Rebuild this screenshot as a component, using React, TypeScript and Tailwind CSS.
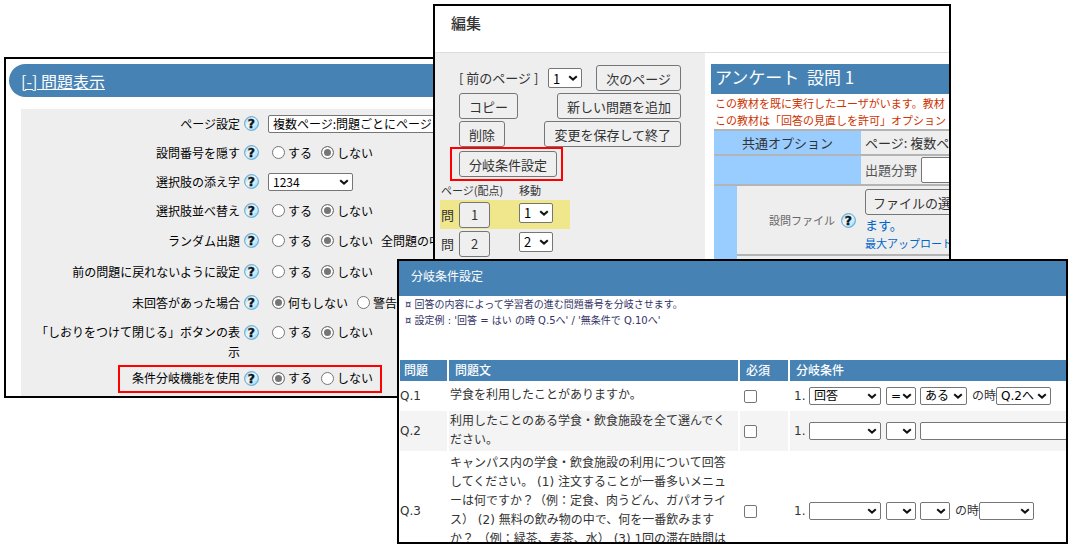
import type { ReactNode } from 'react';

const jp = "font-['Noto_Sans_CJK_JP',sans-serif]";
const verdana = "font-['DejaVu_Sans','Noto_Sans_CJK_JP',sans-serif]";

function HelpIcon() {
  return (
    <svg viewBox="0 0 15 15" className="size-[15px] shrink-0" role="img" aria-label="ヘルプ">
      <defs>
        <linearGradient id="help" x1="0" y1="0" x2="1" y2="1">
          <stop offset="0" stopColor="#8fc3e0" />
          <stop offset="0.4" stopColor="#eaf7fe" />
          <stop offset="0.7" stopColor="#c8ebfb" />
          <stop offset="1" stopColor="#5cc0ee" />
        </linearGradient>
      </defs>
      <circle cx="7.5" cy="7.5" r="6.9" fill="url(#help)" stroke="#4a9cc8" strokeWidth="0.9" />
      <text
        x="7.5"
        y="12"
        textAnchor="middle"
        fontSize="12.5"
        fontWeight="900"
        fontFamily="DejaVu Sans"
        fill="#0b1620"
        stroke="#0b1620"
        strokeWidth="0.4"
      >
        ?
      </text>
    </svg>
  );
}

function Select({ value = '', label, className }: { value?: string; label: string; className: string }) {
  return (
    <span className={`relative inline-flex shrink-0 ${className}`}>
      <select
        aria-label={label}
        defaultValue={value}
        className="w-full appearance-none rounded-[2px] border border-[#767676] bg-white pl-1 leading-none text-black"
      >
        <option value={value}>{value}</option>
      </select>
      <svg viewBox="0 0 10 6" className="pointer-events-none absolute top-1/2 right-1 h-[6px] w-[10px] -translate-y-1/2">
        <path d="M1.2 1.2 5 4.6 8.8 1.2" fill="none" stroke="#111" strokeWidth="2" />
      </svg>
    </span>
  );
}

function Radio({ name, label, checked = false }: { name: string; label: string; checked?: boolean }) {
  return (
    <label className="flex shrink-0 items-center gap-[3px] whitespace-nowrap">
      <input
        type="radio"
        name={name}
        defaultChecked={checked}
        className="size-[13px] appearance-none rounded-full border border-[#767676] bg-white checked:bg-[#767676] checked:shadow-[inset_0_0_0_2px_#fff]"
      />
      {label}
    </label>
  );
}

function YesNo({ name, yes = false }: { name: string; yes?: boolean }) {
  return (
    <div className="flex gap-[9px] pl-1">
      <Radio name={name} label="する" checked={yes} />
      <Radio name={name} label="しない" checked={!yes} />
    </div>
  );
}

function SettingRow({ label, className, children }: { label: ReactNode; className: string; children: ReactNode }) {
  return (
    <div className={`flex gap-[9px] ${className}`}>
      <div className="flex w-[238px] shrink-0 justify-end gap-1">
        <span className="text-right leading-5">{label}</span>
        <span className="flex h-5 items-center">
          <HelpIcon />
        </span>
      </div>
      <div className="flex h-5 items-center gap-2 whitespace-nowrap">{children}</div>
    </div>
  );
}

function DisplaySettings() {
  return (
    <section className="absolute top-[57px] left-1 flex h-[341px] w-[54%] flex-col overflow-hidden border-2 border-black bg-white pt-[5px] pl-[3px]">
      <h2 className="flex h-[33px] shrink-0 items-center rounded-l-full bg-[#4682b4] pl-3 text-base text-white">
        <a href="#display" className="underline">
          [-] 問題表示
        </a>
      </h2>
      <div className="mt-3 ml-3 flex-1 bg-[#eee] text-xs text-black">
        <SettingRow label="ページ設定" className="h-[29px] items-center">
          <Select label="ページ設定" value="複数ページ:問題ごとにページ" className="h-[18px] w-[220px]" />
        </SettingRow>
        <SettingRow label="設問番号を隠す" className="h-[29px] items-center">
          <YesNo name="hide-number" />
        </SettingRow>
        <SettingRow label="選択肢の添え字" className="h-[29px] items-center">
          <Select label="選択肢の添え字" value="1234" className="h-[18px] w-[85px]" />
        </SettingRow>
        <SettingRow label="選択肢並べ替え" className="h-[29px] items-center">
          <YesNo name="sort" />
        </SettingRow>
        <SettingRow label="ランダム出題" className="h-[31px] items-center">
          <YesNo name="random" />
          <span>全問題の中</span>
        </SettingRow>
        <SettingRow label="前の問題に戻れないように設定" className="h-[31px] items-center">
          <YesNo name="no-back" />
        </SettingRow>
        <SettingRow label="未回答があった場合" className="h-[31px] items-center">
          <div className="flex gap-[9px] pl-1">
            <Radio name="unanswered" label="何もしない" checked />
            <Radio name="unanswered" label="警告" />
          </div>
        </SettingRow>
        <SettingRow
          label={
            <>
              「しおりをつけて閉じる」ボタンの表
              <br />示
            </>
          }
          className="h-[45px] pt-1"
        >
          <YesNo name="bookmark" />
        </SettingRow>
        <div className="relative">
          <SettingRow label="条件分岐機能を使用" className="h-[30px] items-center">
            <YesNo name="branch" yes />
          </SettingRow>
          <span className="pointer-events-none absolute top-[2px] left-[97px] h-[28px] w-[264px] border-2 border-[#f00]" />
        </div>
      </div>
    </section>
  );
}

function Button({ children, className = 'px-[9px]' }: { children: ReactNode; className?: string }) {
  return (
    <button
      type="button"
      className={`h-[26px] shrink-0 rounded-[3px] border border-[#767676] bg-[#efefef] text-[13px] leading-none whitespace-nowrap ${className}`}
    >
      {children}
    </button>
  );
}

function PageRow({ page, className = '' }: { page: string; className?: string }) {
  return (
    <div className={`flex h-[29px] w-[130px] items-center pl-px text-[13px] ${className}`}>
      <span className="w-[18px]">問</span>
      <Button className="w-[31px]">{page}</Button>
      <Select label={`問 ${page} 移動`} value={page} className="mb-1 ml-[29px] h-5 w-[34px]" />
    </div>
  );
}

function Sidebar() {
  return (
    <nav className="w-[270px] shrink-0 bg-[#eee] pt-3">
      <div className="ml-6 flex w-[222px] flex-col gap-[2px]">
        <div className="flex h-[26px] items-center text-[13px]">
          <span className="w-[89px] whitespace-nowrap">[ 前のページ ]</span>
          <Select label="ページ" value="1" className="h-5 w-[34px]" />
          <span className="flex-1" />
          <Button>次のページ</Button>
        </div>
        <div className="flex justify-between">
          <Button>コピー</Button>
          <Button>新しい問題を追加</Button>
        </div>
        <div className="flex justify-between">
          <Button>削除</Button>
          <Button>変更を保存して終了</Button>
        </div>
      </div>
      <div className="ml-[15px] flex h-[34px] w-[113px] items-center border-2 border-[#f00] pl-[7px]">
        <Button>分岐条件設定</Button>
      </div>
      <div className="flex h-[19px] items-center pl-[6px] text-[11px]">
        <span className="w-[78px]">ページ(配点)</span>
        <span>移動</span>
      </div>
      <div className="pl-[5px]">
        <PageRow page="1" className="bg-[#f0e68c]" />
        <PageRow page="2" />
      </div>
    </nav>
  );
}

function QuestionForm() {
  const cell = 'border-t-2 border-[#b4b4b4] pl-1';
  return (
    <div className="min-w-0 flex-1 overflow-hidden pt-[11px] pl-[6px]">
      <h3 className="h-[30px] bg-[#4682b4] pl-1 text-[17px] leading-[26px] whitespace-nowrap text-white">
        アンケート{'\u00a0 '}設問 1
      </h3>
      <p className="h-[35px] pt-px pl-1 text-[11px] leading-[17px] whitespace-nowrap text-[#cc3300]">
        この教材を既に実行したユーザがいます。教材
        <br />
        この教材は「回答の見直しを許可」オプション
      </p>
      <table className="ml-[3px] w-[400px] table-fixed border-collapse bg-[#eee] text-left text-[13px] whitespace-nowrap">
        <colgroup>
          <col className="w-[23px]" />
          <col className="w-[124px]" />
          <col />
        </colgroup>
        <tbody>
          <tr className="h-[25px]">
            <th colSpan={2} className="border-t-2 border-[#b4b4b4] bg-[#99ccff] text-center leading-5 font-normal">
              共通オプション
            </th>
            <td className={`${cell} leading-5`}>ページ: 複数ページ</td>
          </tr>
          <tr className="h-[30px]">
            <th colSpan={2} className="border-t-2 border-[#b4b4b4] bg-[#99ccff]" />
            <td className={`${cell} text-[#555]`}>
              <label className="flex items-center gap-1">
                出題分野
                <input type="text" className="h-[26px] w-40 rounded-[2px] border border-[#767676] bg-white" />
              </label>
            </td>
          </tr>
          <tr className="h-[70px]">
            <th rowSpan={2} className="border-t-2 border-[#b4b4b4] bg-[#99ccff]" />
            <th className="border-t-2 border-[#b4b4b4] pr-[5px] font-normal text-[#666]">
              <span className="flex items-center justify-end gap-[6px] text-[11px]">
                設問ファイル
                <HelpIcon />
              </span>
            </th>
            <td className={cell}>
              <Button className="px-[7px]">ファイルの選択</Button>
              <p className="leading-5 text-[#0066cc]">ます。</p>
              <p className="text-[11px] leading-4 text-[#0066cc]">最大アップロード</p>
            </td>
          </tr>
          <tr className="h-[34px]">
            <th className="border-t-2 border-[#b4b4b4]" />
            <td className={cell}>
              <Button>ファイルの選択</Button>
            </td>
          </tr>
        </tbody>
      </table>
    </div>
  );
}

function EditWindow() {
  return (
    <section className="absolute top-1 left-[433px] flex h-[290px] w-[518px] flex-col overflow-hidden border-2 border-black bg-white text-[#333]">
      <h1 className="flex h-[47px] shrink-0 items-center border-b border-[#ddd] pb-3 pl-4 text-[15px] font-medium">編集</h1>
      <div className="flex min-h-0 flex-1">
        <Sidebar />
        <QuestionForm />
      </div>
    </section>
  );
}

type Row = { id: string; text: ReactNode; className: string; condition: ReactNode };

const rows: Row[] = [
  {
    id: 'Q.1',
    text: '学食を利用したことがありますか。',
    className: 'h-[26px]',
    condition: (
      <>
        <Select label="対象" value="回答" className="h-[18px] w-[72px]" />
        <Select label="比較" value="=" className="ml-[5px] h-[18px] w-[30px]" />
        <Select label="値" value="ある" className="ml-1 h-[18px] w-[47px]" />
        <span className="ml-[5px]">の時</span>
        <Select label="移動先" value="Q.2へ" className="h-[18px] w-[55px]" />
      </>
    ),
  },
  {
    id: 'Q.2',
    text: (
      <>
        利用したことのある学食・飲食施設を全て選んでく
        <br />
        ださい。
      </>
    ),
    className: 'h-10 bg-[#f4f4f4]',
    condition: (
      <>
        <Select label="対象" className="h-[18px] w-[72px]" />
        <Select label="比較" className="ml-[5px] h-[18px] w-[30px]" />
        <input type="text" aria-label="値" className="ml-1 h-[18px] w-40 shrink-0 rounded-[2px] border border-[#767676] bg-white" />
      </>
    ),
  },
  {
    id: 'Q.3',
    text: (
      <>
        キャンパス内の学食・飲食施設の利用について回答
        <br />
        してください。 (1) 注文することが一番多いメニュ
        <br />
        ーは何ですか？（例：定食、肉うどん、ガパオライ
        <br />
        ス） (2) 無料の飲み物の中で、何を一番飲みます
        <br />
        か？ （例：緑茶、麦茶、水） (3) 1回の滞在時間は
      </>
    ),
    className: 'h-[116px]',
    condition: (
      <>
        <Select label="対象" className="h-[18px] w-[72px]" />
        <Select label="比較" className="ml-[5px] h-[18px] w-[30px]" />
        <Select label="値" className="ml-1 h-[18px] w-[30px]" />
        <span className="ml-[5px]">の時</span>
        <Select label="移動先" className="h-[18px] w-[55px]" />
      </>
    ),
  },
];

function BranchWindow() {
  return (
    <section
      className={`absolute top-[259px] right-[6px] left-[397px] h-[285px] overflow-hidden border-2 border-black bg-white text-xs text-[#333] ${verdana}`}
    >
      <h2 className="flex h-[35px] items-center bg-[#4682b4] pb-1 pl-3 text-white">分岐条件設定</h2>
      <ul className="h-[62px] pt-px pl-[6px] text-[10px] leading-4 text-[#333366]">
        <li>¤ 回答の内容によって学習者の進む問題番号を分岐させます。</li>
        <li>¤ 設定例 : '回答 = はい の時 Q.5へ' / '無条件で Q.10へ'</li>
      </ul>
      <div className="-mr-1 -ml-px">
        <table className="w-full table-fixed border-separate border-spacing-[2px]">
          <colgroup>
            <col className="w-[47px]" />
            <col className="w-[289px]" />
            <col className="w-[48px]" />
            <col />
          </colgroup>
          <thead>
            <tr className="h-[21px] bg-[#4682b4] text-left text-white">
              <th className="pl-1 leading-none font-medium">問題</th>
              <th className="pl-[6px] leading-none font-medium">問題文</th>
              <th className="pl-[6px] leading-none font-medium">必須</th>
              <th className="pl-[6px] leading-none font-medium">分岐条件</th>
            </tr>
          </thead>
          <tbody>
            {rows.map(row => (
              <tr key={row.id} className={row.className}>
                <td>{row.id}</td>
                <td className="pl-px align-top leading-[19px] whitespace-nowrap">
                  <div className={row.id === 'Q.1' ? 'pt-[3px]' : 'pt-px'}>{row.text}</div>
                </td>
                <td className="pl-1">
                  <input
                    type="checkbox"
                    aria-label={`${row.id} 必須`}
                    className="block size-[13px] appearance-none rounded-[2px] border border-[#767676] bg-white"
                  />
                </td>
                <td className="overflow-hidden pl-1">
                  <div className="flex items-center whitespace-nowrap">
                    <span className="w-[15px] shrink-0">1.</span>
                    {row.condition}
                  </div>
                </td>
              </tr>
            ))}
          </tbody>
        </table>
      </div>
    </section>
  );
}

export default function App() {
  return (
    <main className={`relative min-h-screen w-full overflow-hidden bg-white ${jp}`}>
      <DisplaySettings />
      <EditWindow />
      <BranchWindow />
    </main>
  );
}
